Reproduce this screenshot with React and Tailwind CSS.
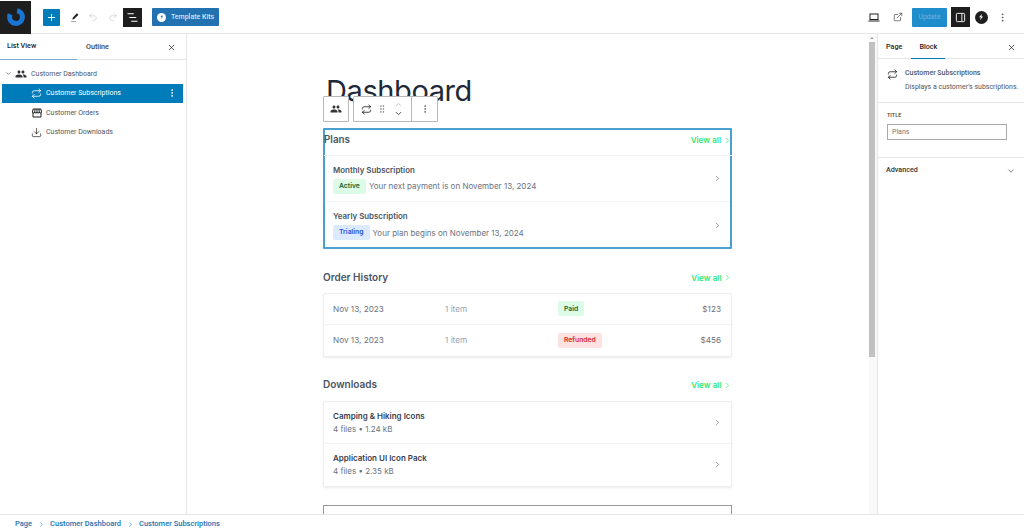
import { ChevronRight, ChevronDown, ChevronUp, Repeat, X, MoreVertical, Download, Plus, Undo2, Redo2, ExternalLink, GripVertical } from 'lucide-react';
import { MdPeople, MdStorefront } from 'react-icons/md';

const ViewAll = () => (
  <span className="flex items-center gap-[1.5px] text-[8.2px] font-medium text-[#22e55c]">
    View all <ChevronRight size={9} strokeWidth={1.6} />
  </span>
);

const Badge = ({ color, children }) => (
  <span className={`inline-flex h-[15px] items-center rounded-[2px] px-[6px] text-[6.8px] font-semibold ${color}`}>
    {children}
  </span>
);

const SubRow = ({ title, badge, text, border }) => (
  <div className={`flex h-[46px] items-center justify-between pl-[8px] pr-[8.5px] ${border ? 'border-b border-[#f1f2f6]' : ''}`}>
    <div>
      <div className="text-[7.9px] leading-[12px] font-semibold text-[#4b5563]">{title}</div>
      <div className="mt-[3px] flex items-center gap-[3px] text-[8px] text-[#6b7280]">
        {badge}
        <span>{text}</span>
      </div>
    </div>
    <ChevronRight size={9} strokeWidth={1.6} className="text-[#4b5563]" />
  </div>
);

const OrderRow = ({ date, badge, price, border }) => (
  <div className={`flex h-[31px] items-center pl-[9px] pr-[10px] text-[8.2px] ${border ? 'border-b border-[#f1f2f6]' : ''}`}>
    <span className="w-[112px] text-[#6b7280]">{date}</span>
    <span className="w-[113px] text-[#9ca3af]">1 item</span>
    <span className="flex-1">{badge}</span>
    <span className="text-[#6b7280]">{price}</span>
  </div>
);

const DownloadRow = ({ title, text, border }) => (
  <div className={`flex h-[42px] items-center justify-between pl-[9px] pr-[9.5px] ${border ? 'border-b border-[#f1f2f6]' : ''}`}>
    <div>
      <div className="text-[8px] leading-[12px] font-semibold text-[#374151]">{title}</div>
      <div className="mt-[1px] text-[8px] leading-[12px] text-[#6b7280]">{text}</div>
    </div>
    <ChevronRight size={9} strokeWidth={1.6} className="text-[#4b5563]" />
  </div>
);

const BoltLogo = ({ size, bg, fg }) => (
  <span className="flex items-center justify-center rounded-full" style={{ width: size, height: size, background: bg }}>
    <svg viewBox="0 0 10 10" width={size * 0.62} height={size * 0.62}>
      <path d="M6.3 1 2.6 5.4h2.2L3.7 9l3.8-4.5H5.3z" fill={fg} />
    </svg>
  </span>
);

const TreeRow = ({ icon, label, active }) => (
  <div className={`flex h-[19.5px] items-center pl-[29px] pr-[6px] ${active ? 'bg-[#007cba] text-white' : 'text-[#50575e]'}`}>
    <span className="flex w-[15px] justify-start">{icon}</span>
    <span className="flex-1 text-[7px]">{label}</span>
    {active && <MoreVertical size={10} strokeWidth={2} />}
  </div>
);

export default function App() {
  return (
    <div className="flex h-[531px] w-[1024px] flex-col overflow-hidden bg-white font-['Roboto',sans-serif] text-[#1e1e1e]">
      {/* Top bar */}
      <header className="flex h-[34px] shrink-0 items-center border-b border-[#e6e6e6] pt-px">
        <div className="flex h-[33px] w-[31px] items-center justify-center bg-[#1e1e1e]">
          <svg viewBox="0 0 24 24" width="22" height="22" fill="none">
            <circle cx="12" cy="12" r="7" stroke="#1a75d2" strokeWidth="5.5" strokeDasharray="34 10" transform="rotate(-80 12 12)" />
          </svg>
        </div>
        <button className="ml-[12px] flex h-[17px] w-[17px] items-center justify-center rounded-[1px] bg-[#007cba] text-white">
          <Plus size={11} strokeWidth={2} />
        </button>
        <svg viewBox="0 0 12 12" width="11" height="11" className="ml-[9px]">
          <path d="M8.6 1.4 10.3 3 5.6 7.7 3.6 8.3 4.1 6.2z" fill="#1e1e1e" />
          <rect x="2.2" y="10" width="5.5" height="1" fill="#9a9a9a" />
        </svg>
        <Undo2 size={10} strokeWidth={1.4} className="ml-[8px] text-[#c4c4c4]" />
        <Redo2 size={10} strokeWidth={1.4} className="ml-[10px] text-[#c4c4c4]" />
        <button className="ml-[5px] flex h-[19px] w-[19px] items-center justify-center bg-[#1e1e1e]">
          <svg viewBox="0 0 12 12" width="15" height="15" stroke="#fff" strokeWidth="0.9">
            <path d="M2 3h5M3.5 6H9M5 9h5" />
          </svg>
        </button>
        <button className="ml-[10px] flex h-[18px] w-[67px] items-center justify-center gap-[5px] rounded-[1px] bg-[#2271b1] text-[7px] font-medium text-[#d5e3ef]">
          <BoltLogo size={9} bg="#fff" fg="#2271b1" />
          Template Kits
        </button>
        <div className="flex-1" />
        <svg viewBox="0 0 12 12" width="12" height="12" fill="none" stroke="#1e1e1e" className="mr-[13px]">
          <rect x="2" y="3" width="8" height="5.5" strokeWidth="1" />
          <path d="M0.5 10h11" strokeWidth="1" />
        </svg>
        <ExternalLink size={10} strokeWidth={1.5} className="mr-[9px] text-[#333]" />
        <button className="flex h-[19px] w-[35px] items-center justify-center rounded-[1px] bg-[#1f8ccb] text-[7px] text-[#66b4df]">
          Update
        </button>
        <button className="ml-[4px] flex h-[20px] w-[19px] items-center justify-center bg-[#1e1e1e]">
          <svg viewBox="0 0 12 12" width="11" height="11" fill="none" stroke="#fff" strokeWidth="1">
            <rect x="1.5" y="1.5" width="9" height="9" rx="1" />
            <path d="M7.5 2v8" />
          </svg>
        </button>
        <span className="ml-[5px]"><BoltLogo size={13} bg="#1e1e1e" fg="#fff" /></span>
        <MoreVertical size={11} strokeWidth={1.5} className="mr-[16px] ml-[9px] text-[#444]" />
      </header>

      <div className="flex min-h-0 flex-1">
        {/* List view sidebar */}
        <aside className="w-[187px] shrink-0 border-r border-[#e6e6e6]">
          <div className="flex h-[26px] items-center border-b border-[#e6e6e6] pt-px text-[7.2px] font-medium">
            <div className="flex h-[26px] w-[77px] items-center border-b border-[#7fa9cc] pl-[7px]">List View</div>
            <div className="flex h-[26px] w-[77px] items-center pl-[9px] text-[#444]">Outline</div>
            <div className="flex flex-1 justify-end pr-[10px]"><X size={9} strokeWidth={2} /></div>
          </div>
          <div className="mt-[4px] pl-[2px] pr-[3px]">
            <div className="flex h-[19.5px] items-center pl-[3px] text-[#50575e]">
              <ChevronDown size={7} strokeWidth={2.2} />
              <span className="ml-[3px] flex w-[16px]"><MdPeople size={12} className="text-[#333]" /></span>
              <span className="text-[7px]">Customer Dashboard</span>
            </div>
            <TreeRow active icon={<Repeat size={11} strokeWidth={1.8} />} label="Customer Subscriptions" />
            <TreeRow icon={<MdStorefront size={12} className="text-[#1e1e1e]" />} label="Customer Orders" />
            <TreeRow icon={<Download size={11} strokeWidth={1.5} className="text-[#1e1e1e]" />} label="Customer Downloads" />
          </div>
        </aside>

        {/* Canvas */}
        <main className="relative min-w-0 flex-1 overflow-hidden font-['Inter',sans-serif]">
          <div className="ml-[136px] w-[409px]">
            <h1 className="mt-[38px] h-[38px] pl-[3px] text-[29px] leading-[38px] font-normal tracking-[-0.4px] text-[#1f2937]">Dashboard</h1>

            {/* Block toolbar */}
            <div className="absolute top-[62px] left-[136px] z-10 flex">
              <div className="flex h-[26px] w-[26px] items-center justify-center rounded-[1px] border border-[#b8b8b8] bg-white">
                <MdPeople size={12} className="text-[#333]" />
              </div>
              <div className="ml-[4px] flex h-[26px] w-[85px] items-center rounded-[1px] border border-[#b8b8b8] bg-white">
                <div className="flex h-full w-[58px] items-center border-r border-[#b8b8b8] pl-[7px]">
                  <Repeat size={11} strokeWidth={1.8} />
                  <GripVertical size={10} strokeWidth={1.3} className="ml-[5px] text-[#666]" />
                  <div className="ml-[7px] flex flex-col items-center">
                    <ChevronUp size={9} strokeWidth={1.3} className="text-[#888]" />
                    <ChevronDown size={9} strokeWidth={2} />
                  </div>
                </div>
                <div className="flex flex-1 justify-center"><MoreVertical size={10} strokeWidth={1.5} className="text-[#444]" /></div>
              </div>
            </div>

            {/* Plans */}
            <section className="mt-[18px] h-[121px] rounded-[1px] border-2 border-[#4a9fd1]">
              <div className="-mr-[1.5px] -ml-[1px] flex h-[26px] items-start justify-between border-b border-[#f1f2f6] pt-[3px]">
                <h2 className="text-[9.8px] leading-[14px] font-semibold text-[#4b5563]">Plans</h2>
                <span className="mt-[1px]"><ViewAll /></span>
              </div>
              <SubRow
                border
                title="Monthly Subscription"
                badge={<Badge color="bg-[#dcfce7] text-[#166534]">Active</Badge>}
                text="Your next payment is on November 13, 2024"
              />
              <SubRow
                title="Yearly Subscription"
                badge={<Badge color="bg-[#dbeafe] text-[#1d4ed8]">Trialing</Badge>}
                text="Your plan begins on November 13, 2024"
              />
            </section>

            {/* Order history */}
            <div className="mt-[20.5px] flex items-center justify-between">
              <h2 className="text-[10px] leading-[14px] font-semibold text-[#4b5563]">Order History</h2>
              <span className="mt-[2px]"><ViewAll /></span>
            </div>
            <section className="mt-[9px] rounded-[2px] border border-[#eceef1] shadow-[0_1px_2px_rgba(0,0,0,0.08)]">
              <OrderRow border date="Nov 13, 2023" price="$123" badge={<Badge color="bg-[#dcfce7] text-[#166534]">Paid</Badge>} />
              <OrderRow date="Nov 13, 2023" price="$456" badge={<Badge color="bg-[#fee2e2] text-[#dc2626]">Refunded</Badge>} />
            </section>

            {/* Downloads */}
            <div className="mt-[20.5px] flex items-center justify-between">
              <h2 className="text-[10px] leading-[14px] font-semibold text-[#4b5563]">Downloads</h2>
              <span className="mt-[2px]"><ViewAll /></span>
            </div>
            <section className="mt-[9px] rounded-[2px] border border-[#eceef1] shadow-[0_1px_2px_rgba(0,0,0,0.08)]">
              <DownloadRow border title="Camping & Hiking Icons" text="4 files • 1.24 kB" />
              <DownloadRow title="Application UI Icon Pack" text="4 files • 2.35 kB" />
            </section>

            <div className="mt-[18px] h-[12px] border border-b-0 border-[#9a9a9a]" />
          </div>
        </main>

        {/* Scrollbar */}
        <div className="w-[8px] shrink-0 bg-[#f9f9f9]">
          <svg viewBox="0 0 6 6" width="6" height="6" className="mt-px">
            <path d="M3 2 1.2 4h3.6z" fill="#999" />
          </svg>
          <div className="mt-px h-[315px] w-[6px] bg-[#c1c1c1]" />
        </div>

        {/* Settings sidebar */}
        <aside className="w-[147px] shrink-0 border-l border-[#e6e6e6]">
          <div className="flex h-[25px] border-b border-[#e6e6e6] text-[7.2px] font-medium">
            <div className="flex h-[25px] items-center pt-[2px] pl-[8px]">Page</div>
            <div className="ml-[9px] flex h-[25px] w-[34px] items-center justify-center border-b border-[#007cba] pt-[2px]">Block</div>
            <div className="flex flex-1 items-center justify-end pt-[2px] pr-[8px]"><X size={9} strokeWidth={2} /></div>
          </div>
          <div className="flex h-[44px] border-b border-[#e6e6e6] pt-[9px] pl-[9px] text-[#50575e]">
            <Repeat size={11} strokeWidth={1.8} className="mt-[1px] text-[#1e1e1e]" />
            <div className="ml-[7px]">
              <div className="text-[7px] leading-[11px] font-medium">Customer Subscriptions</div>
              <div className="mt-[3px] text-[7px] leading-[11px] whitespace-nowrap">Displays a customer's subscriptions.</div>
            </div>
          </div>
          <div className="h-[55px] border-b border-[#e6e6e6] pt-[8px] pl-[9px]">
            <div className="text-[5.5px] leading-[8px] font-medium text-[#444]">TITLE</div>
            <div className="mt-[5px] flex h-[16px] w-[120px] items-center border border-[#aaa] pl-[4px] text-[7px] text-[#777]">Plans</div>
          </div>
          <div className="flex h-[25px] items-center justify-between pr-[8px] pl-[8px] text-[7.2px] font-medium text-[#333]">
            Advanced
            <ChevronDown size={10} strokeWidth={1.5} />
          </div>
        </aside>
      </div>

      {/* Breadcrumb */}
      <footer className="flex h-[17px] shrink-0 items-center gap-[5.5px] border-t border-[#e6e6e6] pt-[2px] pl-[15px] text-[7.5px] font-medium text-[#2271b1]">
        <span>Page</span>
        <ChevronRight size={7} strokeWidth={2} />
        <span>Customer Dashboard</span>
        <ChevronRight size={7} strokeWidth={2} />
        <span>Customer Subscriptions</span>
      </footer>
    </div>
  );
}
